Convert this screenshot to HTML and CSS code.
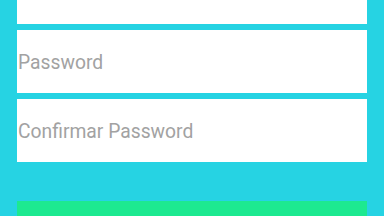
FILE: index.html
```html
<!DOCTYPE html>
<html lang="pt">
<head>
    <meta charset="UTF-8">
    <meta name="viewport" content="width=device-width, initial-scale=1.0">
    <title>Registo</title>
    <link rel="stylesheet" href="styles.css">
</head>
<body>
    <div class="form">
        <input class="field" type="email" placeholder="Email">
        <input class="field" type="password" placeholder="Password">
        <input class="field" type="password" placeholder="Confirmar Password">
        <button class="submit"></button>
    </div>
</body>
</html>
```

FILE: styles.css
```css
* {
    margin: 0;
    padding: 0;
    box-sizing: border-box;
}

body {
    font-family: Roboto, 'Noto Sans', sans-serif;
    background: #26d3e3;
    overflow: hidden;
}

.form {
    display: flex;
    flex-direction: column;
    gap: 6px;
    margin: -39px 17px 0;
}

.field {
    height: 63px;
    border: none;
    outline: none;
    background: #fff;
    padding: 2px 1px 0;
    font-family: inherit;
    font-size: 19.3px;
    color: #333;
}

.field::placeholder {
    color: #a2a2a2;
}

.submit {
    height: 48px;
    margin-top: 33px;
    border: none;
    background: #1de990;
}
```
